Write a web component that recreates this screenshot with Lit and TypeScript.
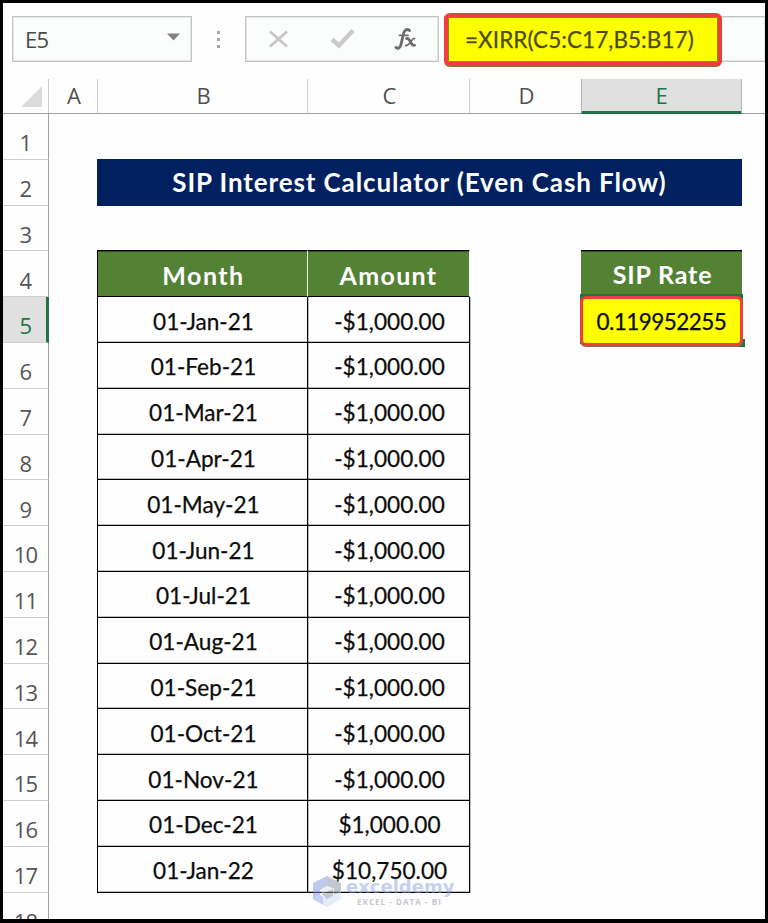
import { LitElement, html, css, svg, nothing } from "lit";
import { customElement, property } from "lit/decorators.js";
import { classMap } from "lit/directives/class-map.js";

const ENTRIES: [string, string][] = [
  ["01-Jan-21", "-$1,000.00"],
  ["01-Feb-21", "-$1,000.00"],
  ["01-Mar-21", "-$1,000.00"],
  ["01-Apr-21", "-$1,000.00"],
  ["01-May-21", "-$1,000.00"],
  ["01-Jun-21", "-$1,000.00"],
  ["01-Jul-21", "-$1,000.00"],
  ["01-Aug-21", "-$1,000.00"],
  ["01-Sep-21", "-$1,000.00"],
  ["01-Oct-21", "-$1,000.00"],
  ["01-Nov-21", "-$1,000.00"],
  ["01-Dec-21", "$1,000.00"],
  ["01-Jan-22", "$10,750.00"],
];

@customElement("formula-bar")
class FormulaBar extends LitElement {
  @property() cell = "";
  @property() formula = "";

  static styles = css`
    :host {
      display: flex;
      align-items: flex-start;
      height: 76px;
      padding: 13px 0 0 9px;
      box-sizing: border-box;
      font: 22px "Open Sans", "Noto Sans", sans-serif;
      color: #4a4a4a;
    }
    .box {
      display: flex;
      align-items: center;
      height: 46px;
      box-sizing: border-box;
      border: 1px solid #c3c5c4;
      box-shadow: inset 0 0 0 1px #e4e6e5;
      background: #fbfdfc;
    }
    .name {
      width: 180px;
      justify-content: space-between;
      padding: 0 11px 0 12px;
      letter-spacing: -0.6px;
    }
    .name svg {
      margin-top: -4px;
    }
    .dots {
      width: 53px;
      height: 46px;
      display: flex;
      flex-direction: column;
      align-items: center;
      justify-content: center;
      gap: 4px;
    }
    .dots i {
      width: 3px;
      height: 3px;
      background: #a9a9a9;
    }
    .tools {
      width: 194px;
      margin-right: 5px;
    }
    .entry {
      position: relative;
      flex: 1;
      border-right: 0;
    }
    .mark {
      position: absolute;
      left: -1px;
      top: -4px;
      width: 278px;
      height: 53px;
      box-sizing: border-box;
      border: 4px solid #ef3f3c;
      border-radius: 6px;
      background: #ffff00;
      box-shadow: inset 0 0 0 1px #8d8a00, 0 1px 0 #8d7030;
      display: flex;
      align-items: center;
      padding-left: 17px;
      font-family: Lato, sans-serif;
      font-size: 22.5px;
      letter-spacing: 0.06px;
      color: #4c4a10;
      -webkit-text-stroke: 0.25px #4c4a10;
      white-space: nowrap;
    }
  `;

  render() {
    return html`
      <div class="box name">
        <span>${this.cell}</span>
        <svg width="13" height="8" viewBox="0 0 13 8"><path d="M0 .5H13L6.5 7.5Z" fill="#808080" /></svg>
      </div>
      <div class="dots"><i></i><i></i><i></i></div>
      <div class="box tools">
        <svg width="192" height="44" viewBox="0 0 192 44" fill="none">
          <path d="M24 14.500L41 29.500M41 14.500L24 29.500" stroke="#c6c6c6" stroke-width="2.8" />
          <path d="M86 22.500L93 28.500L107 13.500" stroke="#cacaca" stroke-width="4.4" />
          <g stroke="#6c6c6c" stroke-linecap="round">
            <path d="M163.500 13.500C160.500 11 158 13.500 157.300 17.500L155 27.500C154.200 31 152.500 32 150 30.500" stroke-width="2.9" />
            <path d="M153.500 18.300H162" stroke-width="1.800" />
            <path d="M160.500 21.500C164.500 20 164.500 30 168.500 28.200" stroke-width="2.700" />
            <path d="M168.500 21.500C166 20.500 163.500 29.500 159.500 28.500" stroke-width="1.700" />
          </g>
        </svg>
      </div>
      <div class="box entry"><div class="mark"><span>${this.formula}</span></div></div>
    `;
  }
}

@customElement("sheet-grid")
class SheetGrid extends LitElement {
  static styles = css`
    :host {
      display: block;
      font-family: Lato, sans-serif;
      color: #0c0c0c;
    }
    .row {
      display: grid;
      grid-template-columns: 46px 49px 210px 162px 112px 160px 1fr;
      height: 45.8px;
    }
    .row.cols {
      height: 35px;
      border-bottom: 1px solid #a0a0a0;
      box-sizing: border-box;
      font: 22px/33px "Open Sans", "Noto Sans", sans-serif;
      color: #505050;
      text-align: center;
    }
    .row.cols > div {
      border-right: 1px solid #cfcfcf;
      padding-left: 2px;
    }
    .row.cols > div:last-child {
      border-right: 0;
    }
    .row.cols .corner {
      display: flex;
      align-items: flex-end;
      justify-content: flex-end;
      padding: 0 6px 6px 0;
    }
    .row.cols .on {
      background: #e0e0e0;
      color: #217346;
      margin-left: -1px;
      padding-left: 0;
      border-left: 1px solid #b5b5b5;
      border-right-color: #b5b5b5;
      box-shadow: inset 0 -2px #217346, 0 1px #217346;
    }
    .num {
      border-right: 1px solid #a0a0a0;
      border-bottom: 1px solid #cfcfcf;
      font: 22px/30px "Open Sans", "Noto Sans", sans-serif;
      letter-spacing: -0.8px;
      color: #555;
      text-align: center;
      padding-top: 13.2px;
      box-sizing: border-box;
    }
    .num.on {
      background: #e0e0e0;
      color: #217346;
      border-right: 3px solid #217346;
      padding-left: 2px;
    }
    .title {
      grid-column: 3 / 7;
      margin: -1px 0 0 -1px;
      background: #00205f;
      color: #fff;
      font-weight: 700;
      font-size: 26px;
      letter-spacing: 0.88px;
      display: flex;
      align-items: center;
      justify-content: center;
      white-space: nowrap;
    }
    .cell {
      display: flex;
      align-items: center;
      justify-content: center;
      box-sizing: border-box;
      border-right: 1px solid #000;
      border-bottom: 1px solid #000;
      box-shadow: 1px 0 rgba(0, 0, 0, 0.25), inset 0 -1px rgba(0, 0, 0, 0.25);
      font-size: 22.6px;
      -webkit-text-stroke: 0.25px currentColor;
      padding: 3px 0 0 2px;
      white-space: nowrap;
    }
    .month {
      grid-column: 3;
      margin-left: -1px;
      border-left: 1px solid #000;
    }
    .amount {
      grid-column: 4;
    }
    .rate {
      grid-column: 6;
    }
    .head {
      background: #548235;
      color: #fff;
      font-weight: 700;
      font-size: 25px;
      letter-spacing: 1.5px;
      border-right-color: #fff;
      margin-top: -1px;
      border-top: 1px solid #000;
      padding-top: 2px;
      -webkit-text-stroke: 0;
      box-shadow: inset 0 1px rgba(0, 0, 0, 0.4);
    }
    .head.amount {
      padding-left: 0;
      letter-spacing: 1.3px;
    }
    .head.rate {
      border-right: 0;
      border-bottom: 0;
      margin-left: -1px;
      letter-spacing: 0.85px;
      padding-top: 0;
    }
    .pick {
      grid-column: 6;
      position: relative;
    }
    .frame {
      position: absolute;
      left: -2px;
      top: -3px;
      width: 163px;
      height: 50px;
      background: #217346;
    }
    .mark {
      position: absolute;
      left: -2px;
      top: -1px;
      width: 163px;
      height: 50px;
      box-sizing: border-box;
      border: 3px solid #ef3f3c;
      border-radius: 6px;
      background: #ffff00;
      box-shadow: 0 1px 0 #85705c;
      display: flex;
      align-items: center;
      justify-content: center;
      font-size: 22.5px;
      letter-spacing: -0.55px;
      -webkit-text-stroke: 0.25px currentColor;
    }
    .handle {
      position: absolute;
      left: 155px;
      top: 42px;
      width: 8px;
      height: 8px;
      background: #217346;
    }
  `;

  private body(n: number) {
    if (n === 2) return html`<div class="title"><span>SIP Interest Calculator (Even Cash Flow)</span></div>`;
    if (n === 4)
      return html`<div class="cell head month">Month</div>
        <div class="cell head amount">Amount</div>
        <div class="cell head rate">SIP Rate</div>`;
    const entry = ENTRIES[n - 5];
    if (!entry) return nothing;
    return html`<div class="cell month">${entry[0]}</div>
      <div class="cell amount">${entry[1]}</div>
      ${n === 5
        ? html`<div class="pick"><div class="frame"></div><div class="handle"></div><div class="mark"><span>0.119952255</span></div></div>`
        : nothing}`;
  }

  render() {
    return html`
      <div class="row cols">
        <div class="corner"><svg width="21" height="21"><path d="M21 0V21H0Z" fill="#dcdcdc" /></svg></div>
        ${["A", "B", "C", "D", "E", ""].map((c) => html`<div class=${classMap({ on: c === "E" })}>${c}</div>`)}
      </div>
      ${Array.from({ length: 18 }, (_, i) => i + 1).map(
        (n) => html`<div class="row"><div class=${classMap({ num: true, on: n === 5 })}>${n}</div>${this.body(n)}</div>`
      )}
    `;
  }
}

@customElement("app-root")
class AppRoot extends LitElement {
  static styles = css`
    :host {
      display: block;
      position: relative;
      width: 768px;
      height: 923px;
      box-sizing: border-box;
      border: 3px solid #000;
      border-bottom-width: 4px;
      overflow: hidden;
      background: #fefefe;
    }
    .brand {
      position: absolute;
      left: 310px;
      top: 873px;
      display: flex;
      gap: 5px;
      opacity: 0.5;
    }
    .words {
      display: flex;
      flex-direction: column;
      padding-top: 1px;
    }
    .big {
      font: 700 18px/20px "DejaVu Sans", sans-serif;
      color: #8fa3e6;
    }
    .small {
      font: 700 8px/9px "Open Sans", sans-serif;
      color: #8c929c;
      letter-spacing: 1.05px;
      padding-left: 11px;
      white-space: nowrap;
    }
  `;

  render() {
    return html`
      <formula-bar cell="E5" formula="=XIRR(C5:C17,B5:B17)"></formula-bar>
      <sheet-grid></sheet-grid>
      <div class="brand">
        <svg width="28" height="31" viewBox="0 0 28 31">
          ${svg`<path d="M0 7L14 0V10L7 14V19L0 23Z" fill="#7f96e3" />
          <path d="M14 0L28 7V22L21 19V13L14 10Z" fill="#8a919f" />
          <path d="M0 23L7 19L14 22L28 15V23L14 31Z" fill="#c9dcf3" />
          <path d="M0 23L7 19L10 21V29Z" fill="#8da2e6" />
          <path d="M8 14L14 10L21 13V19L14 22L8 19Z" fill="#dfe3ee" />
          <path d="M9 18L20 13V20L14 23Z" fill="#8a919f" />`}
        </svg>
        <div class="words"><span class="big">exceldemy</span><span class="small">EXCEL - DATA - BI</span></div>
      </div>
    `;
  }
}
